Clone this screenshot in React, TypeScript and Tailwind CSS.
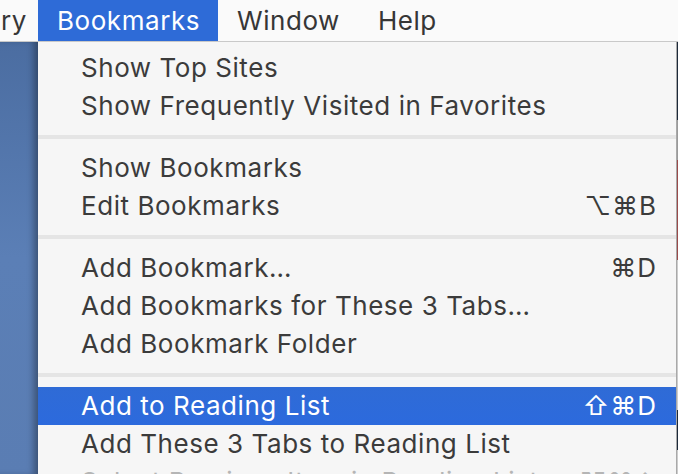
import React from "react";

type Item = { label: string; shortcut?: string; highlighted?: boolean; disabled?: boolean };

const sections: Item[][] = [
  [{ label: "Show Top Sites" }, { label: "Show Frequently Visited in Favorites" }],
  [{ label: "Show Bookmarks" }, { label: "Edit Bookmarks", shortcut: "⌥⌘B" }],
  [
    { label: "Add Bookmark…", shortcut: "⌘D" },
    { label: "Add Bookmarks for These 3 Tabs…" },
    { label: "Add Bookmark Folder" },
  ],
  [
    { label: "Add to Reading List", shortcut: "⇧⌘D", highlighted: true },
    { label: "Add These 3 Tabs to Reading List" },
    { label: "Select Previous Item in Reading List", shortcut: "⌥⌘↑", disabled: true },
  ],
];

function Row({ item }: { item: Item }) {
  const cls = item.highlighted
    ? "bg-gradient-to-b from-[#2f6bd6] to-[#2c6add] text-white"
    : item.disabled
    ? "text-[#b5b5b5]"
    : "text-[#3b3b3b]";
  return (
    <div className={`flex h-[38px] shrink-0 items-center justify-between pl-[43px] pr-[19px] ${cls}`}>
      <span className="tracking-[0.55px]">{item.label}</span>
      {item.shortcut && <span className="tracking-[1px]">{item.shortcut}</span>}
    </div>
  );
}

export default function App() {
  return (
    <div
      className="flex h-[474px] w-[678px] flex-col overflow-hidden bg-[#f6f6f6] text-[26px] leading-none"
      style={{ fontFamily: "Inter, 'Liberation Sans', sans-serif" }}
    >
      <div className="flex h-[42px] shrink-0 items-stretch border-b border-[#c9c9c9] bg-[#fafafa] tracking-[0.55px] text-[#363636]">
        <div className="flex w-[38px] items-center pl-[1px]">ry</div>
        <div className="flex w-[180px] items-center bg-[#2e6bd7] px-[19px] text-white">Bookmarks</div>
        <div className="flex items-center px-[19px]">Window</div>
        <div className="flex items-center px-[19px]">Help</div>
      </div>
      <div className="flex flex-1 overflow-hidden">
        <div className="w-[38px] shrink-0 bg-gradient-to-b from-[#4b6da1] via-[#5b7fb6] to-[#5a7db3] shadow-[inset_-7px_0_7px_-3px_rgba(0,0,0,0.35)]" />
        <div className="flex w-[639px] shrink-0 flex-col border-r border-[#a9a9a9] bg-[#f6f6f6] pt-[7px]">
          {sections.map((sec, i) => (
            <React.Fragment key={i}>
              {i > 0 && (
                <div className="flex h-[24px] shrink-0 items-center">
                  <div className="h-[4px] w-full bg-[#e5e5e5]" />
                </div>
              )}
              {sec.map((it) => (
                <Row key={it.label} item={it} />
              ))}
            </React.Fragment>
          ))}
        </div>
        <div className="flex w-[1px] shrink-0 flex-col">
          <div className="h-[78px] bg-[#1d2a3a]" />
          <div className="h-[40px] bg-[#9a9a9a]" />
          <div className="h-[100px] bg-[#9a4a4a]" />
          <div className="h-[150px] bg-[#cccccc]" />
          <div className="h-[40px] bg-[#1d2a3a]" />
          <div className="flex-1 bg-[#cccccc]" />
        </div>
      </div>
    </div>
  );
}
